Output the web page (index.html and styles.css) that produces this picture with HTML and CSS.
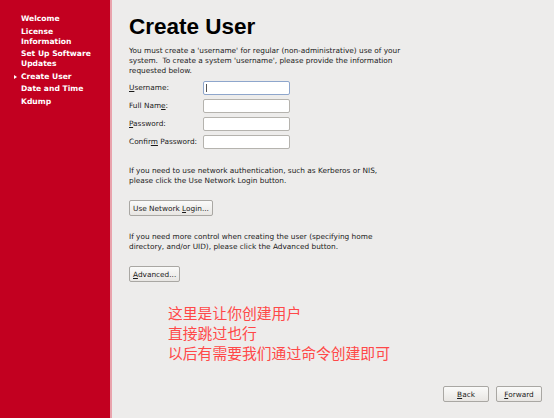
FILE: index.html
```html
<!DOCTYPE html>
<html>
<head>
<meta charset="utf-8">
<link rel="stylesheet" href="styles.css">
</head>
<body>
<div class="app">
  <nav class="sidebar">
    <ul class="steps">
      <li>Welcome</li>
      <li>License<br>Information</li>
      <li>Set Up Software<br>Updates</li>
      <li class="current">Create User</li>
      <li>Date and Time</li>
      <li>Kdump</li>
    </ul>
  </nav>
  <main class="content">
    <h1 class="title">Create User</h1>
    <p class="intro">You must create a 'username' for regular (non-administrative) use of your system.&nbsp; To create a system 'username', please provide the information requested below.</p>
    <div class="form">
      <label class="lbl"><u>U</u>sername:</label><div class="input focus"><span class="caret"></span></div>
      <label class="lbl">Full Nam<u>e</u>:</label><div class="input"></div>
      <label class="lbl"><u>P</u>assword:</label><div class="input"></div>
      <label class="lbl">Confir<u>m</u> Password:</label><div class="input"></div>
    </div>
    <p class="para p1">If you need to use network authentication, such as Kerberos or NIS, please click the Use Network Login button.</p>
    <button class="btn net">Use Network <u>L</u>ogin...</button>
    <p class="para p2">If you need more control when creating the user (specifying home directory, and/or UID), please click the Advanced button.</p>
    <button class="btn adv"><u>A</u>dvanced...</button>
    <div class="note">
      <div>这里是让你创建用户</div>
      <div>直接跳过也行</div>
      <div>以后有需要我们通过命令创建即可</div>
    </div>
    <div class="nav">
      <button class="btn navbtn"><u>B</u>ack</button>
      <button class="btn navbtn"><u>F</u>orward</button>
    </div>
  </main>
</div>
</body>
</html>
```
FILE: styles.css
```css
html, body {
  margin: 0;
  padding: 0;
  width: 554px;
  height: 418px;
  overflow: hidden;
  background: #edeceb;
}
.app {
  display: flex;
  width: 554px;
  height: 418px;
  font-family: "DejaVu Sans", sans-serif;
  color: #1a1a1a;
}
.sidebar {
  width: 110px;
  flex: none;
  background: #c20020;
  border-right: 2px solid #e9a3ac;
}
.steps {
  list-style: none;
  margin: 0;
  padding: 14px 0 0 21px;
  color: #fff;
  font-weight: bold;
  font-size: 7.6px;
  line-height: 10px;
}
.steps li {
  margin-bottom: 2.6px;
  position: relative;
}
.steps li.current::before {
  content: "";
  position: absolute;
  left: -7px;
  top: 3px;
  border-left: 3px solid #fff;
  border-top: 2px solid transparent;
  border-bottom: 2px solid transparent;
}
.content {
  flex: 1;
  padding: 0 0 0 17px;
  display: flex;
  flex-direction: column;
  align-items: flex-start;
  font-size: 7.35px;
  line-height: 10px;
}
.title {
  font-family: "Liberation Sans", Arial, sans-serif;
  font-size: 22.5px;
  font-weight: bold;
  margin: 14px 0 0 0;
  line-height: 26px;
  color: #000;
}
.intro {
  margin: 6px 0 0 0;
  width: 276px;
}
.form {
  display: grid;
  grid-template-columns: 74px 87px;
  row-gap: 4px;
  margin-top: 5px;
  align-items: center;
}
.lbl { line-height: 14px; }
.input {
  height: 12px;
  background: #fff;
  border: 1px solid #b5b3ae;
  border-radius: 2px;
  position: relative;
}
.input.focus {
  border-color: #8ea6cc;
}
.caret {
  position: absolute;
  left: 2px;
  top: 2px;
  width: 1px;
  height: 8px;
  background: #555;
}
.para {
  margin: 0;
  width: 262px;
}
.p1 { margin-top: 17px; }
.p2 { margin-top: 16px; }
.btn {
  font-family: "DejaVu Sans", sans-serif;
  font-size: 7.35px;
  color: #1a1a1a;
  background: linear-gradient(#fafaf9, #e8e6e3);
  border: 1px solid #a9a7a3;
  border-radius: 2px;
  height: 16px;
  padding: 0 3px;
  line-height: 13px;
}
.net { margin-top: 14px; }
.adv { margin-top: 14px; }
.note {
  margin: 21px 0 0 39px;
  font-family: "Noto Sans CJK SC", sans-serif;
  font-size: 14.8px;
  line-height: 20px;
  color: #ff4848;
}
.nav {
  margin-top: auto;
  margin-bottom: 16px;
  align-self: flex-end;
  margin-right: 12px;
  display: flex;
  gap: 7px;
}
.navbtn {
  width: 46px;
  height: 16px;
}
```
